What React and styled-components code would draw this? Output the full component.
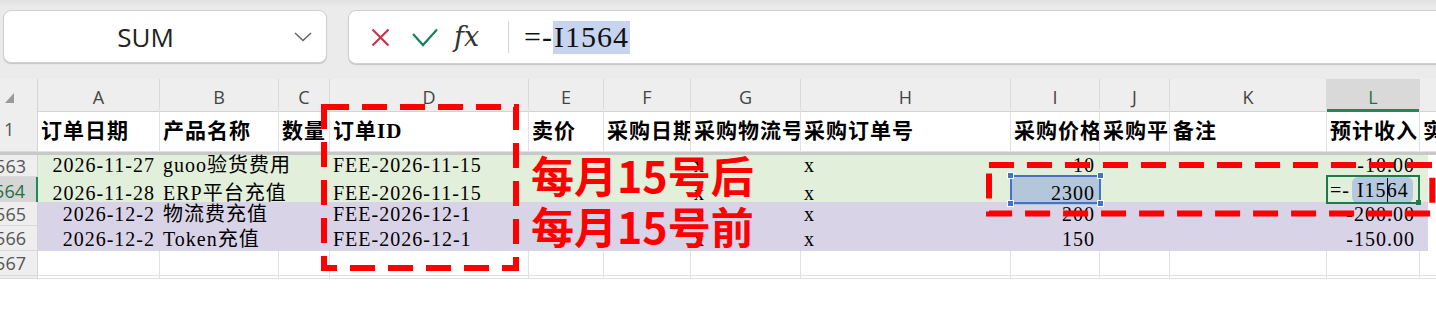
import React from "react";
import styled, { createGlobalStyle, css } from "styled-components";

const GlobalStyle = createGlobalStyle`
  html, body { margin: 0; padding: 0; background: #fff; }
  #root { width: 1436px; height: 317px; }
`;

const CELL_FONT = `"Liberation Serif", "Noto Sans CJK SC", serif`;
const UI_FONT = `"Open Sans", "Noto Sans", sans-serif`;
const GREEN = "#e2efda";
const PURPLE = "#d9d3e8";
const GRID = "#e1e1e1";

const COLS = [122, 119, 51, 199, 75, 87, 110, 210, 89, 70, 157, 93, 140];
const TEMPLATE = `38px ${COLS.map((w) => w + "px").join(" ")}`;

const Page = styled.div`
  position: relative;
  width: 1436px;
  height: 317px;
  overflow: hidden;
  background: #fff;
`;

/* ---------- toolbar ---------- */
const Toolbar = styled.div`
  display: flex;
  align-items: flex-start;
  height: 79px;
  box-sizing: border-box;
  padding: 10px 0 0 3px;
  background: linear-gradient(#e1e1e1 0, #ebebeb 8px, #ebebeb 100%);
`;

const NameBox = styled.div`
  display: flex;
  align-items: center;
  flex: none;
  width: 324px;
  height: 53px;
  box-sizing: border-box;
  background: #fff;
  border: 1px solid #d0d0d0;
  border-radius: 8px;
  box-shadow: 0 1px 1px rgba(0, 0, 0, 0.16);
`;

const NameLabel = styled.span`
  flex: 1;
  text-align: center;
  padding-right: 7px;
  font-family: ${UI_FONT};
  font-size: 26px;
  color: #222;
`;

const Chevron = styled.svg`
  flex: none;
  margin-right: 14px;
`;

const FormulaBox = styled.div`
  display: flex;
  align-items: center;
  flex: none;
  width: 1200px;
  height: 54px;
  margin-left: 21px;
  box-sizing: border-box;
  padding-left: 22px;
  background: #fff;
  border: 1px solid #d0d0d0;
  border-radius: 8px;
  box-shadow: 0 1px 1px rgba(0, 0, 0, 0.16);
`;

const ToolIcon = styled.svg`
  flex: none;
  margin-left: ${(p) => p.$gap || 0}px;
`;

const FxLabel = styled.span`
  flex: none;
  width: 30px;
  margin-left: 16px;
  font-family: "DejaVu Serif", "Liberation Serif", serif;
  font-style: italic;
  font-size: 27px;
  color: #333;
  position: relative;
  top: -1px;
`;

const Divider = styled.span`
  flex: none;
  width: 1px;
  height: 32px;
  margin-left: 24px;
  background: #d4d4d4;
`;

const FormulaText = styled.div`
  margin-left: 15px;
  font-family: ${CELL_FONT};
  font-size: 30px;
  letter-spacing: 1px;
  color: #111;
  display: flex;
  align-items: center;
`;

const RefHighlight = styled.span`
  display: inline-block;
  height: 33px;
  box-sizing: border-box;
  padding: 0 1px 2px 1px;
  line-height: 31px;
  background: #c6d4ef;
`;

/* ---------- sheet ---------- */
const Row = styled.div`
  display: grid;
  grid-template-columns: ${TEMPLATE};
  height: ${(p) => p.$h}px;
  background: ${(p) =>
    p.$fill ? `linear-gradient(to right, ${p.$fill} 1428px, #fff 1428px)` : "#fff"};
`;

const Corner = styled.div`
  display: flex;
  align-items: flex-end;
  box-sizing: border-box;
  padding: 0 0 8px 5px;
  background: #eeeeee;
  border-right: 1px solid #d6d6d6;
  border-bottom: 1px solid #d6d6d6;
`;

const ColHead = styled.div`
  display: flex;
  align-items: center;
  justify-content: center;
  box-sizing: border-box;
  padding-top: 4px;
  background: #eeeeee;
  border-right: 1px solid #d8d8d8;
  border-bottom: 1px solid #d4d4d4;
  font-family: ${UI_FONT};
  font-size: 18px;
  color: #444;
  ${(p) =>
    p.$active &&
    css`
      background: #d9d9d9;
      color: #1e7145;
      border-bottom: 3px solid #1e8a5a;
      padding-top: 6px;
    `}
`;

const RowHead = styled.div`
  display: flex;
  align-items: center;
  justify-content: ${(p) => (p.$left ? "flex-start" : "flex-end")};
  box-sizing: border-box;
  padding: ${(p) => (p.$left ? "0 0 0 4px" : "0 11px 0 0")};
  overflow: hidden;
  background: #eeeeee;
  border-right: 1px solid #d4d4d4;
  border-bottom: 1px solid #dadada;
  font-family: ${UI_FONT};
  font-size: 18px;
  color: #555;
  ${(p) =>
    p.$active &&
    css`
      background: #d6d6d6;
      color: #1e7145;
      border-right: 2px solid #1e8a5a;
    `}
`;

const Cell = styled.div`
  position: relative;
  display: flex;
  align-items: ${(p) => (p.$head ? "center" : "flex-end")};
  justify-content: ${(p) => (p.$right ? "flex-end" : "flex-start")};
  box-sizing: border-box;
  padding: ${(p) => (p.$head ? "0 0 0 3px" : "0 4px 1px 3px")};
  white-space: nowrap;
  overflow: ${(p) => (p.$head ? "hidden" : "visible")};
  background: ${(p) => (p.$sel ? "#b3c6da" : "transparent")};
  border-right: 1px solid ${(p) => (p.$filled ? "transparent" : GRID)};
  border-bottom: 1px solid ${(p) => (p.$filled ? "transparent" : GRID)};
  font-family: ${CELL_FONT};
  font-size: ${(p) => (p.$head ? 21 : 20)}px;
  font-weight: ${(p) => (p.$head ? 700 : 400)};
  line-height: ${(p) => (p.$head ? "normal" : "20px")};
  letter-spacing: 1px;
  color: #000;
`;

const FreezeBar = styled.div`
  height: 3px;
  background: #c8c8c8;
`;

const SelectFrame = styled.div`
  position: absolute;
  left: -1px;
  right: -2px;
  top: -2px;
  bottom: 0;
  border: 2px solid #4472c4;
  pointer-events: none;
`;

const Handle = styled.span`
  position: absolute;
  width: 5px;
  height: 5px;
  background: ${(p) => p.$color || "#4472c4"};
  border: 1px solid #fff;
  ${(p) => (p.$top ? "top: -5px;" : "bottom: -5px;")}
  ${(p) => (p.$lft ? "left: -5px;" : "right: -5px;")}
`;

const EditFrame = styled.div`
  position: absolute;
  left: -1px;
  right: -1px;
  top: -2px;
  bottom: 0;
  border: 2px solid #1d7a4c;
  pointer-events: none;
`;

const EditHandle = styled.span`
  position: absolute;
  right: -3px;
  bottom: -3px;
  width: 5px;
  height: 5px;
  background: #1d7a4c;
`;

const RefPill = styled.span`
  display: inline-block;
  margin-left: 2px;
  padding: 1px 4px 1px 5px;
  border-radius: 6px;
  background: #b6c8dd;
  line-height: 21px;
`;

const Caret = styled.span`
  display: inline-block;
  width: 1px;
  height: 24px;
  margin-right: -1px;
  background: #111;
  vertical-align: -5px;
`;

/* ---------- annotations ---------- */
const Frame = styled.svg`
  position: absolute;
  overflow: visible;
  pointer-events: none;
`;

const Callouts = styled.div`
  position: absolute;
  left: 531px;
  top: 149px;
  display: flex;
  flex-direction: column;
  font-family: "Noto Sans CJK SC", sans-serif;
  font-weight: 700;
  font-size: 43px;
  line-height: 51px;
  color: #ff0000;
  white-space: nowrap;
  pointer-events: none;
`;

function DashedFrame({ x, y, w, h }) {
  return (
    <Frame
      width={w + 8}
      height={h + 8}
      style={{ left: x - 4, top: y - 4 }}
    >
      <rect
        x="4"
        y="4"
        width={w}
        height={h}
        fill="none"
        stroke="#ff0000"
        strokeWidth="6"
        strokeDasharray="25 13"
      />
    </Frame>
  );
}

const LETTERS = ["A", "B", "C", "D", "E", "F", "G", "H", "I", "J", "K", "L", "M"];
const HEADERS = [
  "订单日期", "产品名称", "数量", "订单ID", "卖价", "采购日期", "采购物流号",
  "采购订单号", "采购价格", "采购平台", "备注", "预计收入", "实际收入",
];

const R = (t) => ({ t, right: true });
const L = (t) => ({ t });

const DATA = [
  {
    n: 1563, h: 22, fill: GREEN,
    cells: [R("2026-11-27"), L("guoo验货费用"), null, L("FEE-2026-11-15"), null, null, L("x"), L("x"), R("10"), null, null, R("-10.00"), null],
  },
  {
    n: 1564, h: 25, fill: GREEN, active: true,
    cells: [R("2026-11-28"), L("ERP平台充值"), null, L("FEE-2026-11-15"), null, null, L("x"), L("x"), { t: "2300", right: true, kind: "sel" }, null, null, { kind: "edit" }, null],
  },
  {
    n: 1565, h: 24, fill: PURPLE,
    cells: [R("2026-12-2"), L("物流费充值"), null, L("FEE-2026-12-1"), null, null, L("x"), L("x"), R("200"), null, null, R("-200.00"), null],
  },
  {
    n: 1566, h: 25, fill: PURPLE,
    cells: [R("2026-12-2"), L("Token充值"), null, L("FEE-2026-12-1"), null, null, L("x"), L("x"), R("150"), null, null, R("-150.00"), null],
  },
  { n: 1567, h: 25, cells: Array(13).fill(null) },
  { n: 1568, h: 3, cells: Array(13).fill(null) },
];

function DataCell({ c, filled }) {
  if (!c) return <Cell $filled={filled} />;
  if (c.kind === "sel") {
    return (
      <Cell $filled={filled} $right $sel>
        {c.t}
        <SelectFrame>
          <Handle $top $lft />
          <Handle $top />
          <Handle $lft />
          <Handle />
        </SelectFrame>
      </Cell>
    );
  }
  if (c.kind === "edit") {
    return (
      <Cell $filled={filled}>
        <span>
          =-<RefPill>I15<Caret />64</RefPill>
        </span>
        <EditFrame>
          <EditHandle />
        </EditFrame>
      </Cell>
    );
  }
  return (
    <Cell $filled={filled} $right={c.right}>
      {c.t}
    </Cell>
  );
}

export default function App() {
  return (
    <Page>
      <GlobalStyle />
      <Toolbar>
        <NameBox>
          <NameLabel>SUM</NameLabel>
          <Chevron width="18" height="10" viewBox="0 0 18 10">
            <polyline points="1,1 9,8.5 17,1" fill="none" stroke="#666" strokeWidth="1.6" />
          </Chevron>
        </NameBox>
        <FormulaBox>
          <ToolIcon width="19" height="19" viewBox="0 0 19 19">
            <path d="M1.5 1.5 L17.5 17.5 M17.5 1.5 L1.5 17.5" stroke="#c8334e" strokeWidth="2.2" fill="none" />
          </ToolIcon>
          <ToolIcon $gap={22} width="26" height="19" viewBox="0 0 26 19">
            <polyline points="1,6 11,17 25,1.5" fill="none" stroke="#17805a" strokeWidth="2.2" />
          </ToolIcon>
          <FxLabel>fx</FxLabel>
          <Divider />
          <FormulaText>
            =-<RefHighlight>I1564</RefHighlight>
          </FormulaText>
        </FormulaBox>
      </Toolbar>

      <Row $h={28}>
        <Corner>
          <svg width="9" height="10" viewBox="0 0 9 10">
            <polygon points="9,0 9,10 0,10" fill="#9a9a9a" />
          </svg>
        </Corner>
        {LETTERS.map((l) => (
          <ColHead key={l} $active={l === "L"}>
            {l}
          </ColHead>
        ))}
      </Row>

      <Row $h={45}>
        <RowHead $left>1</RowHead>
        {HEADERS.map((h) => (
          <Cell key={h} $head>
            {h}
          </Cell>
        ))}
      </Row>

      <FreezeBar />

      {DATA.map((row) => (
        <Row key={row.n} $h={row.h} $fill={row.fill}>
          <RowHead $active={row.active}>{row.h > 5 ? row.n : ""}</RowHead>
          {row.cells.map((c, i) => (
            <DataCell key={i} c={c} filled={!!row.fill} />
          ))}
        </Row>
      ))}

      <DashedFrame x={323.7} y={107} w={192} h={161} />
      <DashedFrame x={988.7} y={164.5} w={443.3} h={48.5} />
      <Callouts>
        <span>每月15号后</span>
        <span>每月15号前</span>
      </Callouts>
    </Page>
  );
}
